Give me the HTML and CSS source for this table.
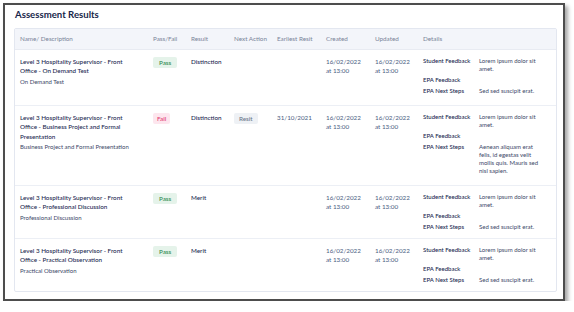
FILE: index.html
```html
<!DOCTYPE html>
<html lang="en">
<head>
<meta charset="utf-8">
<title>Assessment Results</title>
<link rel="stylesheet" href="styles.css">
</head>
<body>
<div class="window">
  <h1 class="title">Assessment Results</h1>
  <div class="card">
    <table class="results">
      <colgroup>
        <col class="c-name"><col class="c-pass"><col class="c-result"><col class="c-next">
        <col class="c-resit"><col class="c-created"><col class="c-updated"><col class="c-details">
      </colgroup>
      <thead>
        <tr>
          <th>Name/ Description</th><th>Pass/Fail</th><th>Result</th><th>Next Action</th>
          <th>Earliest Resit</th><th>Created</th><th>Updated</th><th>Details</th>
        </tr>
      </thead>
      <tbody>
        <tr class="first">
          <td><div class="name">Level 3 Hospitality Supervisor - Front Office - On Demand Test</div><div class="desc">On Demand Test</div></td>
          <td><span class="badge pass">Pass</span></td>
          <td class="result">Distinction</td>
          <td></td>
          <td></td>
          <td class="date">16/02/2022 at 13:00</td>
          <td class="date">16/02/2022 at 13:00</td>
          <td>
            <dl class="details">
              <dt>Student Feedback</dt><dd>Lorem ipsum dolor sit amet.</dd>
              <dt>EPA Feedback</dt><dd></dd>
              <dt>EPA Next Steps</dt><dd>Sed sed suscipit erat.</dd>
            </dl>
          </td>
        </tr>
        <tr class="tall">
          <td><div class="name">Level 3 Hospitality Supervisor - Front Office - Business Project and Formal Presentation</div><div class="desc">Business Project and Formal Presentation</div></td>
          <td><span class="badge fail">Fail</span></td>
          <td class="result">Distinction</td>
          <td><span class="badge resit">Resit</span></td>
          <td class="date">31/10/2021</td>
          <td class="date">16/02/2022 at 13:00</td>
          <td class="date">16/02/2022 at 13:00</td>
          <td>
            <dl class="details">
              <dt>Student Feedback</dt><dd>Lorem ipsum dolor sit amet.</dd>
              <dt>EPA Feedback</dt><dd></dd>
              <dt>EPA Next Steps</dt><dd>Aenean aliquam erat felis, id egestas velit mollis quis. Mauris sed nisl sapien.</dd>
            </dl>
          </td>
        </tr>
        <tr>
          <td><div class="name">Level 3 Hospitality Supervisor - Front Office - Professional Discussion</div><div class="desc">Professional Discussion</div></td>
          <td><span class="badge pass">Pass</span></td>
          <td class="result">Merit</td>
          <td></td>
          <td></td>
          <td class="date">16/02/2022 at 13:00</td>
          <td class="date">16/02/2022 at 13:00</td>
          <td>
            <dl class="details">
              <dt>Student Feedback</dt><dd>Lorem ipsum dolor sit amet.</dd>
              <dt>EPA Feedback</dt><dd></dd>
              <dt>EPA Next Steps</dt><dd>Sed sed suscipit erat.</dd>
            </dl>
          </td>
        </tr>
        <tr>
          <td><div class="name">Level 3 Hospitality Supervisor - Front Office - Practical Observation</div><div class="desc">Practical Observation</div></td>
          <td><span class="badge pass">Pass</span></td>
          <td class="result">Merit</td>
          <td></td>
          <td></td>
          <td class="date">16/02/2022 at 13:00</td>
          <td class="date">16/02/2022 at 13:00</td>
          <td>
            <dl class="details">
              <dt>Student Feedback</dt><dd>Lorem ipsum dolor sit amet.</dd>
              <dt>EPA Feedback</dt><dd></dd>
              <dt>EPA Next Steps</dt><dd>Sed sed suscipit erat.</dd>
            </dl>
          </td>
        </tr>
      </tbody>
    </table>
  </div>
</div>
</body>
</html>
```

FILE: styles.css
```css
* { box-sizing: border-box; }

body {
  margin: 0;
  background: #ffffff;
  font-family: Lato, "Noto Sans", sans-serif;
  color: #1d2b4f;
}

.window {
  margin: 3px 0 0 3px;
  width: 562px;
  height: 298px;
  border: 2px solid #4d4d4d;
  box-shadow: 3px 3px 4px rgba(0, 0, 0, 0.35);
  padding: 4px 6px 0 9px;
  background: #ffffff;
}

.title {
  margin: 0 0 7px 1px;
  font-size: 9.6px;
  line-height: 12px;
  font-weight: 700;
  color: #17264a;
}

.card {
  border: 1px solid #e3e7f0;
  border-radius: 2px;
}

.results {
  width: 541px;
  border-collapse: collapse;
  table-layout: fixed;
}

.c-name { width: 133px; }
.c-pass { width: 38px; }
.c-result { width: 43px; }
.c-next { width: 43px; }
.c-resit { width: 49px; }
.c-created { width: 49px; }
.c-updated { width: 48px; }
.c-details { width: 138px; }

.results th {
  background: #f3f5fa;
  height: 20px;
  padding: 0 0 0 5px;
  text-align: left;
  font-size: 6.3px;
  font-weight: 400;
  color: #7a8499;
  border-bottom: 1px solid #e8ebf2;
  white-space: nowrap;
}

.results td {
  vertical-align: top;
  padding: 7px 6px 7px 5px;
  font-size: 6.3px;
  line-height: 9.5px;
  border-bottom: 1px solid #eceff5;
}

.results tr.first td { padding-bottom: 10px; }
.results tr.tall td { padding-bottom: 10px; }
.results tbody tr:last-child td { border-bottom: none; }

.results td:first-child { padding-right: 10px; }

.name {
  font-weight: 500;
  color: #1a2850;
}

.desc {
  margin-top: 1px;
  font-size: 6px;
  color: #3b4768;
}

.result {
  font-weight: 500;
  color: #1a2850;
}

.date {
  color: #4a5c82;
}

.badge {
  display: inline-block;
  padding: 0 5px;
  height: 11px;
  line-height: 11px;
  border-radius: 2px;
  font-size: 6.3px;
  font-weight: 500;
}

.badge.pass { background: #e5f3ea; color: #2d8a4e; padding: 0 6px; }
.badge.fail { background: #fde6ee; color: #e23a6f; padding: 0 4px; }
.badge.resit { background: #eef1f5; color: #6b7589; }

.details {
  margin: 0;
  display: grid;
  grid-template-columns: 56px 64px;
  row-gap: 3px;
  font-size: 6px;
  line-height: 8px;
}

.details dt {
  font-weight: 500;
  color: #1a2850;
  white-space: nowrap;
}

.details dd {
  margin: 0;
  color: #3b4768;
}
```
